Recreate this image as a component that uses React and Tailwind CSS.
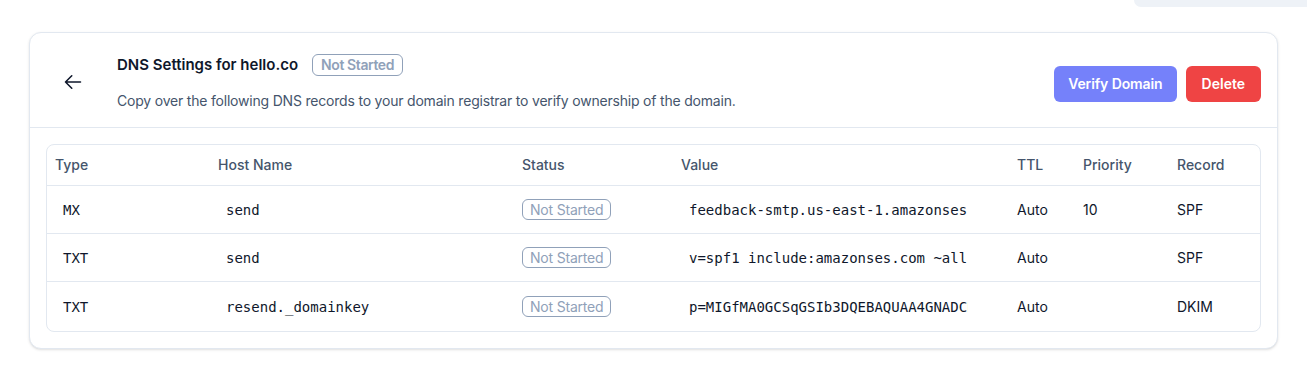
import React from 'react';

const records = [
  { type: 'MX', host: 'send', value: 'feedback-smtp.us-east-1.amazonses.com', ttl: 'Auto', priority: '10', record: 'SPF' },
  { type: 'TXT', host: 'send', value: 'v=spf1 include:amazonses.com ~all', ttl: 'Auto', priority: '', record: 'SPF' },
  {
    type: 'TXT',
    host: 'resend._domainkey',
    value: 'p=MIGfMA0GCSqGSIb3DQEBAQUAA4GNADCBiQKBgQDGx7zP2kQwIDAQAB',
    ttl: 'Auto',
    priority: '',
    record: 'DKIM',
  },
];

const cols = 'grid grid-cols-[163px_304px_159px_336px_66px_94px_1fr] items-center';
const mono = { fontFamily: '"DejaVu Sans Mono", "Liberation Mono", monospace' };

function ArrowLeft() {
  return (
    <svg viewBox="0 0 24 24" className="w-5 h-5 text-slate-900" fill="none" stroke="currentColor" strokeWidth="1.9" strokeLinecap="round" strokeLinejoin="round">
      <path d="M10.5 19.5 3 12m0 0 7.5-7.5M3 12h18" />
    </svg>
  );
}

export default function App() {
  return (
    <div className="min-h-[379px] bg-white font-['Inter',sans-serif]">
      {/* top strip */}
      <div className="flex justify-end">
        <div className="w-[173px] h-[7px] rounded-bl-lg bg-[#eef2f7]" />
      </div>

      <div className="px-[29px] mt-[25px]">
        <div className="rounded-xl border border-slate-200 bg-white shadow-sm">
          {/* Header */}
          <div className="flex items-start pl-[33px] pr-4 pt-[20px] pb-[16px] border-b border-slate-200">
            <div className="self-center">
              <ArrowLeft />
            </div>
            <div className="ml-[34px] flex-1">
              <div className="flex items-center">
                <h1 className="text-[15px] leading-6 font-semibold text-slate-900">DNS Settings for hello.co</h1>
                <span className="ml-[14px] rounded-md border border-slate-400 px-2 text-sm leading-5 font-semibold tracking-[-0.4px] text-slate-400">
                  Not Started
                </span>
              </div>
              <p className="mt-[14px] text-sm leading-5 tracking-[-0.2px] text-slate-600">
                Copy over the following DNS records to your domain registrar to verify ownership of the domain.
              </p>
            </div>
            <div className="self-center mt-[3px] flex items-center gap-[9px]">
              <button className="h-9 px-[14px] rounded-md bg-[#7581fa] text-sm font-semibold tracking-[-0.1px] text-white">Verify Domain</button>
              <button className="h-9 px-4 rounded-md bg-[#ef4444] text-sm font-semibold text-white">Delete</button>
            </div>
          </div>

          {/* Table */}
          <div className="p-4">
            <div className="rounded-lg border border-slate-200 overflow-hidden">
              <div className={`${cols} h-[41px] border-b border-slate-200 text-sm font-medium text-slate-600`}>
                <div className="pl-2">Type</div>
                <div className="pl-2">Host Name</div>
                <div className="pl-2">Status</div>
                <div className="pl-2">Value</div>
                <div className="pl-2">TTL</div>
                <div className="pl-2">Priority</div>
                <div className="pl-2">Record</div>
              </div>
              {records.map((r, i) => (
                <div
                  key={i}
                  className={`${cols} text-sm text-slate-900 ${i < records.length - 1 ? 'h-12 border-b border-slate-200' : 'h-[49px]'}`}
                >
                  <div className="pl-4" style={mono}>{r.type}</div>
                  <div className="pl-4" style={mono}>{r.host}</div>
                  <div className="pl-2">
                    <span className="inline-block rounded-md border border-slate-400 px-[7px] text-sm leading-[19px] tracking-[-0.2px] text-slate-400">
                      Not Started
                    </span>
                  </div>
                  <div className="pl-4">
                    <div className="w-[279px] overflow-hidden whitespace-nowrap" style={mono}>{r.value}</div>
                  </div>
                  <div className="pl-2">{r.ttl}</div>
                  <div className="pl-2">{r.priority}</div>
                  <div className="pl-2">{r.record}</div>
                </div>
              ))}
            </div>
          </div>
        </div>
      </div>
    </div>
  );
}
